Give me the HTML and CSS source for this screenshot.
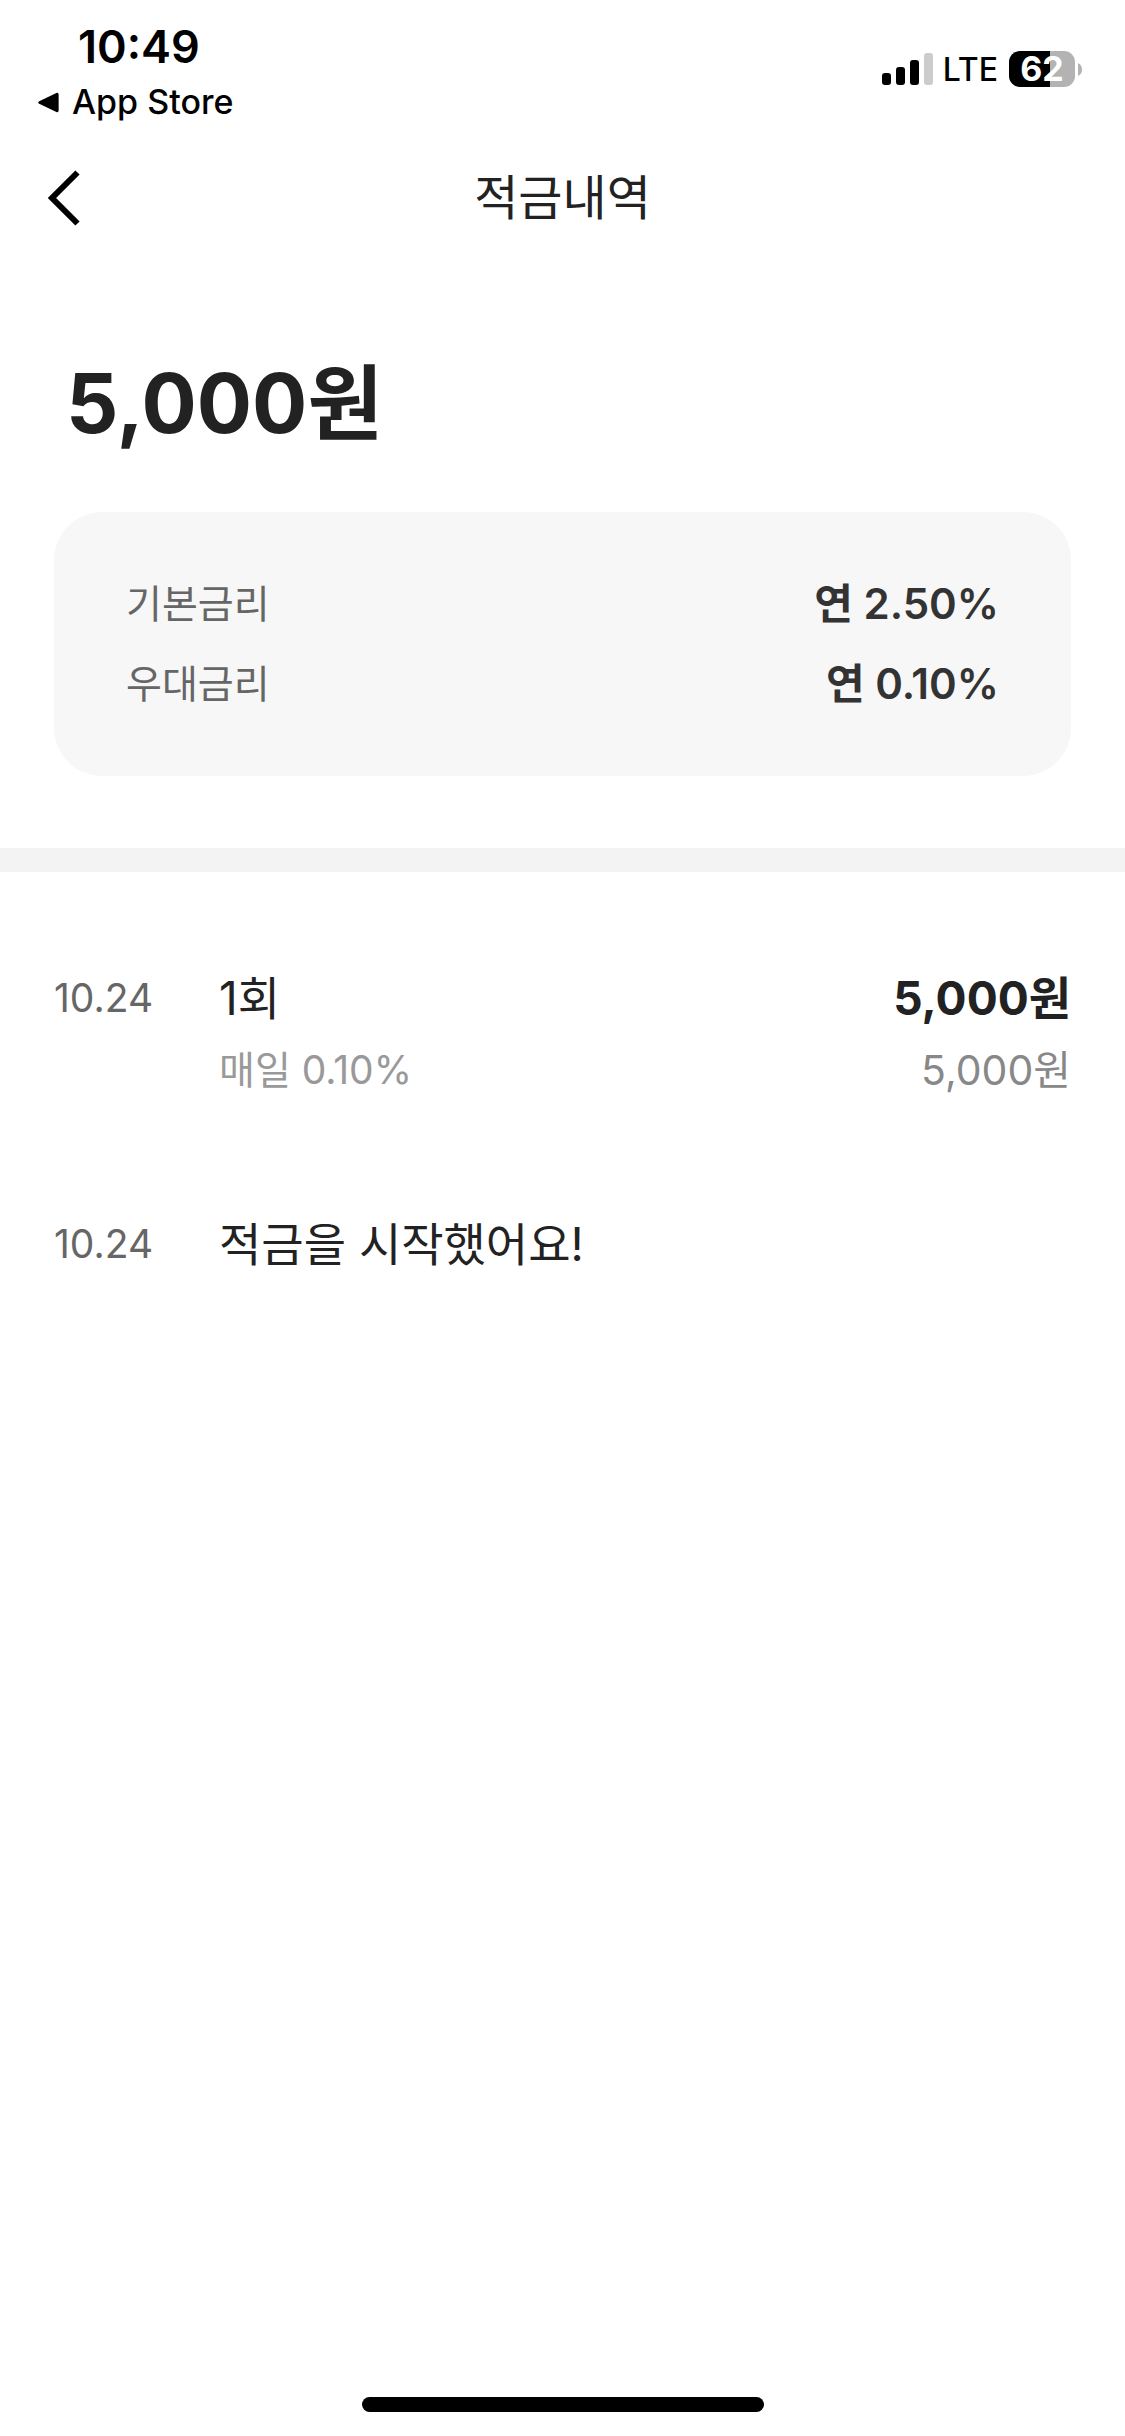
FILE: index.html
```html
<!DOCTYPE html>
<html lang="ko">
<head>
  <meta charset="utf-8">
  <meta name="viewport" content="width=device-width, initial-scale=1">
  <title>적금내역</title>
  <link rel="stylesheet" href="styles.css">
</head>
<body>
  <div class="screen">
    <div class="status-bar">
      <div class="status-left">
        <time class="clock">10:49</time>
        <a class="return-link" href="#">
          <svg class="return-icon" viewBox="0 0 21 21" aria-hidden="true"><path d="M1.2 9.2 18.4 1Q20.6 0.3 20.6 2.5V18.5Q20.6 20.7 18.4 20L1.2 11.8Q-0.8 10.5 1.2 9.2Z"/></svg>
          App Store
        </a>
      </div>
      <div class="status-right">
        <svg class="signal" viewBox="0 0 51 32" aria-hidden="true">
          <rect x="0" y="20" width="9" height="12" rx="3"/>
          <rect x="14" y="14" width="9" height="18" rx="3"/>
          <rect x="28" y="7" width="9" height="25" rx="3"/>
          <rect x="42" y="0" width="9" height="32" rx="3" fill="#ccc"/>
        </svg>
        <span class="network">LTE</span>
        <span class="battery">
          <span class="battery-level">62</span>
          <svg class="battery-cap" viewBox="0 0 4 13" aria-hidden="true"><path d="M0 0Q4 2 4 6.5T0 13Z" fill="#b3b3b3"/></svg>
        </span>
      </div>
    </div>

    <header class="nav">
      <button class="back" type="button" aria-label="뒤로">
        <svg class="back-icon" viewBox="0 0 32 56" aria-hidden="true"><path d="M29.5 2.5 4 28 29.5 53.5" fill="none" stroke="#000" stroke-width="6"/></svg>
      </button>
      <h1 class="title">적금내역</h1>
    </header>

    <main class="content">
      <section class="summary">
        <p class="balance">5,000원</p>
        <dl class="rates">
          <div class="rate">
            <dt class="rate-name">기본금리</dt>
            <dd class="rate-value">연 2.50%</dd>
          </div>
          <div class="rate">
            <dt class="rate-name">우대금리</dt>
            <dd class="rate-value">연 0.10%</dd>
          </div>
        </dl>
      </section>

      <ul class="history">
        <li class="entry">
          <time class="date">10.24</time>
          <div class="detail">
            <p class="name">1회</p>
            <p class="note">매일 0.10%</p>
          </div>
          <div class="sums">
            <p class="paid">5,000원</p>
            <p class="total">5,000원</p>
          </div>
        </li>
        <li class="entry">
          <time class="date">10.24</time>
          <div class="detail">
            <p class="name">적금을 시작했어요!</p>
          </div>
        </li>
      </ul>
    </main>

    <div class="home-indicator"></div>
  </div>
</body>
</html>
```
FILE: styles.css
```css
* {
  box-sizing: border-box;
}

body,
h1,
p,
dl,
dd,
ul {
  margin: 0;
}

body {
  background: #fff;
  color: #222;
  font-family: Inter, "Noto Sans CJK KR", sans-serif;
}

.screen {
  display: flex;
  flex-direction: column;
  min-height: 100vh;
}

/* Status bar */
.status-bar {
  display: flex;
  justify-content: space-between;
  padding: 20px 43px 2px 38px;
  color: #000;
}

.clock {
  display: block;
  padding-left: 40px;
  font-size: 45px;
  font-weight: 600;
  line-height: 54px;
}

.return-link {
  display: flex;
  align-items: center;
  gap: 13px;
  color: inherit;
  font-size: 34px;
  font-weight: 500;
  line-height: 56px;
  text-decoration: none;
}

.return-icon {
  width: 21px;
  height: 21px;
}

.status-right {
  display: flex;
  align-items: center;
  align-self: flex-start;
  height: 98px;
}

.signal {
  width: 51px;
  height: 32px;
  margin-right: 10px;
}

.network {
  margin-right: 11px;
  font-size: 32px;
  font-weight: 500;
}

.battery {
  display: flex;
  align-items: center;
  gap: 3px;
}

.battery-level {
  width: 66px;
  border-radius: 11px;
  background: linear-gradient(to right, #000 62%, #b3b3b3 62%);
  color: #fff;
  font-size: 34px;
  font-weight: 700;
  line-height: 36px;
  text-align: center;
}

.battery-cap {
  width: 4px;
  height: 13px;
}

/* Navigation */
.nav {
  display: grid;
  grid-template-columns: 1fr auto 1fr;
  align-items: center;
  height: 132px;
  padding: 0 48px;
}

.back {
  justify-self: start;
  display: flex;
  padding: 0;
  border: 0;
  background: none;
}

.back-icon {
  width: 32px;
  height: 56px;
}

.title {
  font-size: 48px;
  font-weight: 400;
  line-height: 72px;
}

/* Summary */
.content {
  flex: 1;
}

.summary {
  padding: 90px 54px 72px;
  border-bottom: 24px solid #f3f3f3;
}

.balance {
  margin-bottom: 58px;
  padding-left: 12px;
  font-size: 82px;
  font-weight: 700;
  line-height: 100px;
}

.rates {
  display: flex;
  flex-direction: column;
  gap: 20px;
  padding: 62px 72px;
  border-radius: 48px;
  background: #f7f7f7;
}

.rate {
  display: flex;
  justify-content: space-between;
  line-height: 60px;
}

.rate-name {
  color: #666;
  font-size: 39px;
}

.rate-value {
  color: #333;
  font-size: 42px;
  font-weight: 600;
}

/* History */
.history {
  display: flex;
  flex-direction: column;
  gap: 102px;
  padding: 90px 54px;
  list-style: none;
}

.entry {
  display: flex;
  line-height: 72px;
}

.date {
  width: 165px;
  color: #666;
  font-size: 39px;
}

.detail {
  flex: 1;
}

.name {
  font-size: 46px;
}

.note {
  color: #999;
  font-size: 39px;
}

.sums {
  text-align: right;
}

.paid {
  font-size: 46px;
  font-weight: 700;
}

.total {
  color: #888;
  font-size: 41px;
}

.home-indicator {
  width: 402px;
  height: 15px;
  margin: 0 auto 24px;
  border-radius: 8px;
  background: #000;
}
```
